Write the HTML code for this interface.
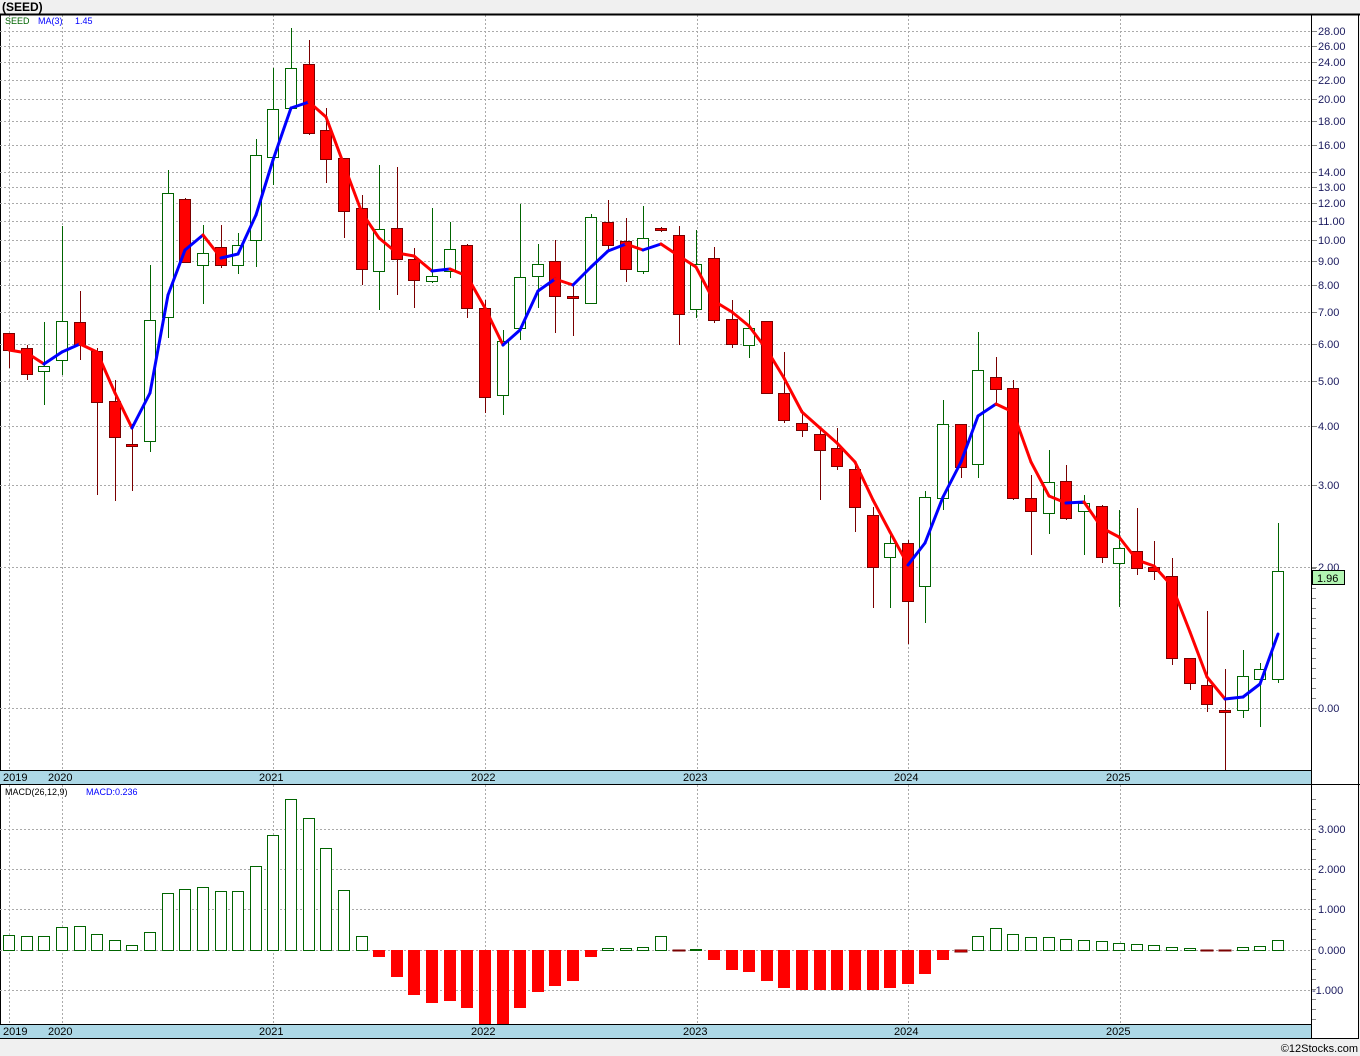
<!DOCTYPE html>
<html><head><meta charset="utf-8"><style>
html,body{margin:0;padding:0;background:#f0f0f0;width:1360px;height:1056px;overflow:hidden}
svg{display:block}
text{font-family:"Liberation Sans",sans-serif}
</style></head><body>
<svg id="s" width="1360" height="1056" xmlns="http://www.w3.org/2000/svg">
<rect x="0" y="0" width="1360" height="1056" fill="#f0f0f0"/>
<rect x="0.5" y="14.5" width="1358" height="1024" fill="#fff" stroke="#000"/>
<text x="2" y="11" font-size="12" font-weight="bold" fill="#000">(SEED)</text>
<g id="grid"></g>
<g id="chart"></g>
<rect x="0" y="770" width="1311" height="14" fill="#add8e6"/>
<rect x="0" y="1024" width="1311" height="14" fill="#add8e6"/>
<line x1="0" y1="770.5" x2="1311" y2="770.5" stroke="#000"/>
<line x1="0" y1="784.5" x2="1360" y2="784.5" stroke="#000"/>
<line x1="0" y1="1024.5" x2="1311" y2="1024.5" stroke="#000"/>
<line x1="1311.5" y1="14" x2="1311.5" y2="1038" stroke="#000"/>
<line x1="0" y1="14.5" x2="1360" y2="14.5" stroke="#000" stroke-width="2"/>
<g font-size="11" fill="#000">
<text x="3" y="781">2019</text><text x="48" y="781">2020</text><text x="259" y="781">2021</text><text x="471" y="781">2022</text><text x="683" y="781">2023</text><text x="894" y="781">2024</text><text x="1106" y="781">2025</text>
<text x="3" y="1035">2019</text><text x="48" y="1035">2020</text><text x="259" y="1035">2021</text><text x="471" y="1035">2022</text><text x="683" y="1035">2023</text><text x="894" y="1035">2024</text><text x="1106" y="1035">2025</text>
</g>
<g font-size="11" fill="#1a1a5e" id="ylab">
<text x="1318" y="35">28.00</text><text x="1318" y="50">26.00</text><text x="1318" y="66">24.00</text><text x="1318" y="84">22.00</text><text x="1318" y="103">20.00</text><text x="1318" y="125">18.00</text><text x="1318" y="149">16.00</text><text x="1318" y="176">14.00</text><text x="1318" y="191">13.00</text><text x="1318" y="207">12.00</text><text x="1318" y="225">11.00</text><text x="1318" y="244">10.00</text><text x="1318" y="265">9.00</text><text x="1318" y="289">8.00</text><text x="1318" y="316">7.00</text><text x="1318" y="348">6.00</text><text x="1318" y="385">5.00</text><text x="1318" y="430">4.00</text><text x="1318" y="489">3.00</text><text x="1318" y="571">2.00</text><text x="1318" y="712">0.00</text>
<text x="1318" y="833">3.000</text><text x="1318" y="873">2.000</text><text x="1318" y="913">1.000</text><text x="1318" y="954">0.000</text><text x="1312" y="994">-1.000</text>
</g>
<rect x="1312.5" y="570.5" width="32" height="14" fill="#b3f5b3" stroke="#000"/>
<text x="1317" y="582" font-size="11" fill="#000">1.96</text>
<text x="5" y="24" font-size="9" fill="#006400">SEED</text>
<text x="38" y="24" font-size="9" fill="#0000ff">MA(3)</text>
<text x="75" y="24" font-size="9" fill="#0000ff">1.45</text>
<text x="5" y="795" font-size="9" fill="#000">MACD(26,12,9)</text>
<text x="86" y="795" font-size="9" fill="#0000ff">MACD:0.236</text>
<text x="1358" y="1052" font-size="11" fill="#000" text-anchor="end">©12Stocks.com</text>
</svg>
<script>
var NS="http://www.w3.org/2000/svg",g=document.getElementById('grid'),c=document.getElementById('chart');
function el(p,t,a){var e=document.createElementNS(NS,t);for(var k in a)e.setAttribute(k,a[k]);p.appendChild(e);return e;}
var ys=[31,46,62,80,99,121,145,172,187,203,221,240,261,285,312,344,381,426,485,567,708];
ys.forEach(function(y){el(g,'line',{x1:0,x2:1311,y1:y+.5,y2:y+.5,stroke:'#aaa','stroke-dasharray':'2,2'});el(g,'line',{x1:1311,x2:1317,y1:y+.5,y2:y+.5,stroke:'#888'});});
[829,869,909,950,990].forEach(function(y){el(g,'line',{x1:0,x2:1311,y1:y+.5,y2:y+.5,stroke:'#aaa','stroke-dasharray':'2,2'});});
for(var y=799;y<1024;y+=10)el(g,'line',{x1:1311,x2:1316,y1:y+.5,y2:y+.5,stroke:'#888'});
for(var y=568;y<708;y+=10)el(g,'line',{x1:1311,x2:1316,y1:y+.5,y2:y+.5,stroke:'#888'});
[9,62,273,485,697,908,1120].forEach(function(x){el(g,'line',{x1:x+.5,x2:x+.5,y1:15,y2:770,stroke:'#aaa','stroke-dasharray':'2,2'});el(g,'line',{x1:x+.5,x2:x+.5,y1:785,y2:1024,stroke:'#aaa','stroke-dasharray':'2,2'});});
var d=[['r',333,350,333,368],['r',348,374,345,380],['u',366,371,322,405],['u',321,360,226,375],['r',322,345,291,360],['r',351,402,348,495],['r',401,437,380,501],['r',444,446,424,491],['u',320,441,265,452],['u',193,317,170,338],['r',199,262,198,262],['u',253,265,225,304],['r',247,265,225,268],['u',245,265,233,274],['u',155,240,139,267],['u',109,157,68,185],['u',68,108,28,110],['r',64,133,40,135],['r',130,159,108,183],['r',158,211,158,238],['r',208,269,195,285],['u',229,271,165,310],['r',228,259,167,295],['r',259,280,248,308],['u',276,281,208,283],['u',249,271,222,278],['r',245,308,244,318],['r',308,397,300,413],['u',341,395,330,415],['u',277,328,204,340],['u',264,276,244,308],['r',261,296,240,333],['r',296,298,285,336],['u',217,303,214,304],['r',222,245,200,252],['r',241,269,218,282],['u',238,271,206,274],['r',228,230,227,232],['r',235,314,226,345],['u',264,309,230,318],['r',258,320,247,323],['r',319,344,300,348],['u',328,345,310,358],['r',321,393,321,394],['r',393,420,352,423],['r',423,430,410,437],['r',434,450,427,500],['r',448,466,428,470],['r',469,507,461,532],['r',515,567,507,608],['u',543,557,533,608],['r',543,601,540,644],['u',497,586,491,623],['u',424,498,400,510],['r',424,467,424,478],['u',370,464,332,478],['r',377,389,357,406],['r',388,498,380,500],['r',498,511,475,555],['u',482,513,450,534],['r',481,518,465,520],['u',503,511,495,555],['r',506,557,505,563],['u',548,563,510,607],['r',551,568,508,575],['r',567,571,541,580],['r',576,658,558,665],['r',658,683,658,690],['r',685,704,611,712],['r',710,712,669,770],['u',676,710,650,718],['u',669,679,663,727],['u',571,679,523,683]];
function X(i){return Math.round(62+(i-3)*17.62);}
d.forEach(function(k,i){var x=X(i),r=k[0]=='r';var col=r?'#7a0000':'#006400';
el(c,'line',{x1:x+.5,x2:x+.5,y1:k[3],y2:k[4],stroke:col});
el(c,'rect',{x:x-5.5,y:k[1]+.5,width:11,height:Math.max(2,k[2]-k[1]),fill:r?'#f00':'#fff',stroke:r?'#7a0000':'#006400'});});
var ma=[350,353,364,352,344,352,393,428,393,295,250,235,258,254,215,160,108,102,117,165,213,238,253,256,271,269,276,308,345,330,291,279,285,267,251,244,250,244,256,267,301,312,326,350,378,412,428,443,462,500,532,565,543,497,462,416,404,412,462,496,503,502,528,537,560,566,586,632,677,699,697,684,634];
for(var i=1;i<ma.length;i++){el(c,'line',{x1:X(i-1),y1:ma[i-1],x2:X(i),y2:ma[i],stroke:ma[i]<ma[i-1]?'#0000ff':'#ff0000','stroke-width':3,'stroke-linecap':'round'});}
var m=[935,936,936,927,926,934,940,945,932,893,889,887,891,891,866,835,799,818,848,890,936,957,977,995,1003,1001,1008,1025,1025,1008,992,986,981,957,948,948,947,936,951,949,960,970,972,981,988,990,990,990,990,990,988,984,974,960,952,936,928,934,937,937,939,940,941,943,944,945,947,948,951,951,947,946,940];
m.forEach(function(v,i){var x=X(i);if(v<950){el(c,'rect',{x:x-5.5,y:v+.5,width:11,height:950-v,fill:'#fff',stroke:'#006400'});}else{el(c,'rect',{x:x-6,y:950,width:12,height:Math.max(1,v-950),fill:'#f00',stroke:v-950<3?'#7a0000':'none'});}});
</script>
</body></html>
